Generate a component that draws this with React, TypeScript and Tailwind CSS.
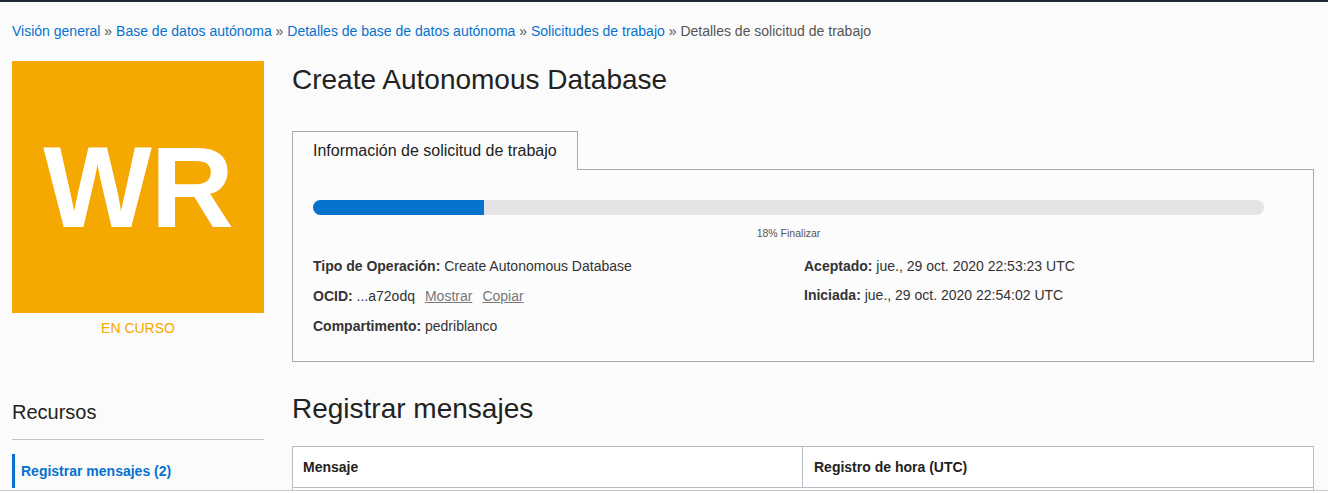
import React from 'react';

const crumbs = [
  'Visión general',
  'Base de datos autónoma',
  'Detalles de base de datos autónoma',
  'Solicitudes de trabajo',
];

const Field = ({ label, children }: { label: string; children: React.ReactNode }) => (
  <div className="leading-[20px]">
    <span className="font-bold">{label}:</span> {children}
  </div>
);

export default function App() {
  return (
    <div className="h-[494px] overflow-hidden bg-white font-['Liberation_Sans',Arial,sans-serif] text-[#333]">
      <div className="h-[491px] overflow-hidden border-b border-[#c4c8ce] bg-[#fbfbfb]">
        <div className="h-[2px] bg-[#1f2833]" />

        {/* Breadcrumb */}
        <div className="mt-[19px] px-[12px] text-[14px] leading-[20px]">
          {crumbs.map((c) => (
            <span key={c}>
              <a className="text-[#0572ce] cursor-pointer">{c}</a>
              <span className="text-[#555]"> » </span>
            </span>
          ))}
          <span className="text-[#555]">Detalles de solicitud de trabajo</span>
        </div>

        <div className="mt-[20px] flex gap-[28px] pl-[12px] pr-[14px]">
          {/* Left column */}
          <div className="w-[252px] shrink-0">
            <div className="flex h-[252px] w-[252px] items-center justify-center bg-[#f5a800]">
              <span className="text-[115px] font-bold leading-none tracking-[-1px] text-white">WR</span>
            </div>
            <div className="mt-[5px] text-center text-[14px] leading-[20px] text-[#f5a800]">EN CURSO</div>

            <h3 className="mt-[60px] text-[20px] leading-[28px] text-[#222]">Recursos</h3>
            <div className="mt-[13px] h-px bg-[#c0c4cc]" />
            <div className="mt-[14px] flex h-[34px] items-center border-l-[3px] border-[#0572ce] pl-[6px] text-[14px] font-bold text-[#0572ce]">
              Registrar mensajes (2)
            </div>
          </div>

          {/* Right column */}
          <div className="flex-1">
            <h1 className="text-[28px] leading-[38px] text-[#222]">Create Autonomous Database</h1>

            <div className="mt-[32px]">
              <div className="relative z-10 -mb-px flex h-[39px] w-[286px] items-center border border-b-0 border-[#aaaaaa] bg-[#fcfcfc] pl-[20px] text-[16px] text-[#222]">
                Información de solicitud de trabajo
              </div>
              <div className="border border-[#aaaaaa] bg-[#fcfcfc] px-[20px] pt-[30px] pb-[25px]">
                <div className="h-[15px] w-[951px] overflow-hidden rounded-full bg-[#e4e4e4]">
                  <div className="h-full bg-[#0572ce]" style={{ width: '18%' }} />
                </div>
                <div className="mt-[11px] w-[951px] text-center text-[10.5px] leading-[14px] text-[#555]">18% Finalizar</div>

                <div className="mt-[16px] grid grid-cols-2 text-[14px]">
                  <div className="flex flex-col gap-[10px]">
                    <Field label="Tipo de Operación">Create Autonomous Database</Field>
                    <div className="leading-[20px]">
                      <span className="font-bold">OCID:</span> ...a72odq
                      <a className="ml-[10px] cursor-pointer text-[#777] underline">Mostrar</a>
                      <a className="ml-[10px] cursor-pointer text-[#777] underline">Copiar</a>
                    </div>
                    <Field label="Compartimento">pedriblanco</Field>
                  </div>
                  <div className="flex flex-col gap-[9px] pl-[1px]">
                    <Field label="Aceptado">jue., 29 oct. 2020 22:53:23 UTC</Field>
                    <Field label="Iniciada">jue., 29 oct. 2020 22:54:02 UTC</Field>
                  </div>
                </div>
              </div>
            </div>

            <h2 className="mt-[28px] text-[28px] leading-[38px] text-[#222]">Registrar mensajes</h2>

            <div className="mt-[18px] border border-[#b8bcc4] bg-white">
              <div className="grid grid-cols-2 border-b border-[#b8bcc4] text-[14px] font-bold text-[#222]">
                <div className="flex h-[40px] items-center border-r border-[#b8bcc4] pl-[10px]">Mensaje</div>
                <div className="flex h-[40px] items-center pl-[11px]">Registro de hora (UTC)</div>
              </div>
              <div className="h-[40px]" />
            </div>
          </div>
        </div>
      </div>
    </div>
  );
}
